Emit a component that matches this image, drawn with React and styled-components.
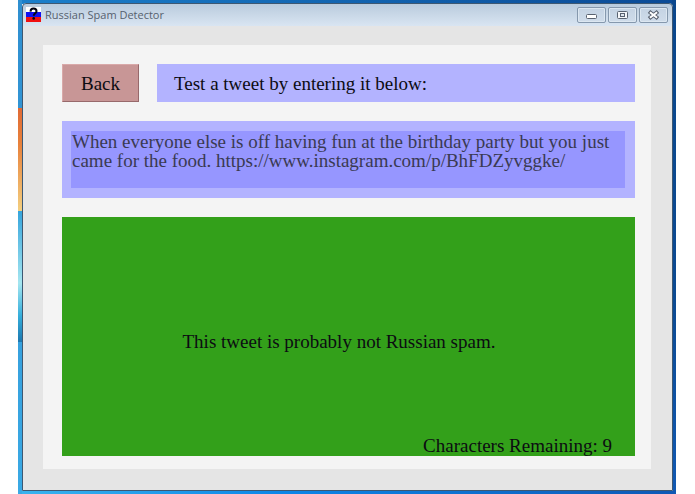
import { useState } from 'react';
import styled, { createGlobalStyle } from 'styled-components';

const serif = `Georgia, 'Liberation Serif', serif`;

const GlobalStyle = createGlobalStyle`
	* {
		box-sizing: border-box;
	}

	body {
		margin: 0;
		background: #fff;
	}
`;

// strip of wallpaper that shows around the window
const Desktop = styled.div`
	display: flex;
	min-height: 100vh;
	margin: 0 19px 0 18px;
	padding: 3px 3px 3px 4px;
	background:
		linear-gradient(#e06a35, #e8823c 35%, #f3cf80) 0 108px / 4px 103px no-repeat,
		linear-gradient(#36a5dc, #a5e6f0 55%, #35aedb 80%, #1c78b0) 0 211px / 4px 131px no-repeat,
		linear-gradient(#2f8fd0, #3aa9e4) 0 0 / 4px 100% no-repeat,
		linear-gradient(#0b478c, #0c4a92 60%, #1159b3) 100% 0 / 4px 100% no-repeat,
		linear-gradient(90deg, #1a7fcb, #0a4a96) 0 0 / 100% 4px no-repeat,
		linear-gradient(90deg, #3ab4ee, #0d86e8 40%, #0f58b5) 0 100% / 100% 4px no-repeat;
`;

const Window = styled.main`
	flex: 1;
	display: flex;
	flex-direction: column;
	overflow: hidden;
	border: 1px solid #e6edf5;
	outline: 1px solid #3d5872;
	outline-offset: -1px;
	border-radius: 4px 4px 0 0;
	background: #e5e5e5;
`;

const TitleBar = styled.header`
	display: flex;
	align-items: flex-start;
	height: 22px;
	padding: 3px 4px 0 3px;
	background: linear-gradient(#b9cbdd, #d9e5f2);
`;

const AppIcon = styled.svg`
	width: 15px;
	height: 15px;
	margin-right: 4px;
`;

const Title = styled.h1`
	flex: 1;
	margin: 0;
	color: #56616e;
	font: 11px/16px 'Segoe UI', 'Open Sans', sans-serif;
`;

const Controls = styled.div`
	display: flex;
	gap: 2px;
`;

const ControlButton = styled.button`
	display: grid;
	place-items: center;
	width: 29px;
	height: 16px;
	padding: 0;
	border: 1px solid #8598ad;
	border-radius: 2px;
	background: linear-gradient(#c4d3e3, #cfdcea);
	box-shadow: inset 0 0 0 1px #dce7f1;
`;

const Panel = styled.section`
	flex: 1;
	display: flex;
	flex-direction: column;
	gap: 19px;
	margin: 19px 21px 21px 20px;
	padding: 19px 16px 13px 19px;
	background: #f4f4f4;
	color: #0c0c12;
	font: 19px/19px ${serif};
`;

const TopRow = styled.div`
	display: flex;
	gap: 18px;
	height: 38px;
`;

const BackButton = styled.button`
	width: 77px;
	padding: 0;
	border: 1px solid;
	border-color: #d9a9a9 #97696b #97696b #d9a9a9;
	background: #c89696;
	color: inherit;
	font: inherit;
`;

const Prompt = styled.label`
	flex: 1;
	display: flex;
	align-items: center;
	padding: 0 17px;
	background: #b3b3ff;
`;

const TweetBox = styled.div`
	display: flex;
	padding: 10px 10px 10px 9px;
	background: #b3b3ff;
`;

const TweetInput = styled.textarea`
	flex: 1;
	height: 57px;
	padding: 1px;
	border: none;
	outline: none;
	resize: none;
	overflow: hidden;
	background: #9696ff;
	color: #3a3a52;
	font: inherit;
`;

const Result = styled.div`
	flex: 1;
	display: flex;
	flex-direction: column;
	padding: 11px 23px 1px 4px;
	background: #33a01a;
`;

const Verdict = styled.p`
	flex: 1;
	display: grid;
	place-items: center;
	margin: 0;
	padding-top: 19px;
`;

const Remaining = styled.p`
	margin: 0;
	text-align: right;
`;

const tweet =
	'When everyone else is off having fun at the birthday party but you just came for the food. https://www.instagram.com/p/BhFDZyvggke/';
const limit = 140;

export default function App() {
	const [text, setText] = useState(tweet);

	return (
		<>
			<GlobalStyle />
			<Desktop>
				<Window>
					<TitleBar>
						<AppIcon viewBox='0 0 15 15' aria-hidden='true'>
							<path fill='#fff' d='M0 0h15v5H0z' />
							<path fill='#1010f0' d='M0 5h15v5H0z' />
							<path fill='#f01010' d='M0 10h15v5H0z' />
							<path
								d='M4.5 4.6C4.6 2.3 6 1.6 7.5 1.6c1.8 0 3 1 3 2.6 0 2-2.7 2.2-2.7 4.6'
								fill='none'
								stroke='#050510'
								strokeWidth='2'
							/>
							<circle cx='7.7' cy='11.4' r='1.3' fill='#050510' />
						</AppIcon>
						<Title>Russian Spam Detector</Title>
						<Controls>
							<ControlButton aria-label='Minimize'>
								<svg width='13' height='12' viewBox='0 0 13 12'>
									<rect x='1.5' y='5.5' width='10' height='4' rx='1' fill='#fff' stroke='#596270' />
								</svg>
							</ControlButton>
							<ControlButton aria-label='Maximize'>
								<svg width='13' height='12' viewBox='0 0 13 12'>
									<rect x='1.5' y='2.5' width='10' height='7' rx='1' fill='#f4f6f9' stroke='#596270' />
									<rect x='4.5' y='4.5' width='4' height='3' fill='#dfe6ee' stroke='#596270' />
								</svg>
							</ControlButton>
							<ControlButton aria-label='Close'>
								<svg width='13' height='12' viewBox='0 0 13 12' fill='none'>
									<path d='M2 2.5l9 7M11 2.5l-9 7' stroke='#596270' strokeWidth='4' />
									<path d='M2.9 3.2l7.2 5.6M10.1 3.2L2.9 8.8' stroke='#fff' strokeWidth='2' />
								</svg>
							</ControlButton>
						</Controls>
					</TitleBar>
					<Panel>
						<TopRow>
							<BackButton>Back</BackButton>
							<Prompt htmlFor='tweet'>Test a tweet by entering it below:</Prompt>
						</TopRow>
						<TweetBox>
							<TweetInput
								id='tweet'
								spellCheck={false}
								maxLength={limit}
								value={text}
								onChange={(e) => setText(e.target.value)}
							/>
						</TweetBox>
						<Result>
							<Verdict>This tweet is probably not Russian spam.</Verdict>
							<Remaining>Characters Remaining: {limit - text.length}</Remaining>
						</Result>
					</Panel>
				</Window>
			</Desktop>
		</>
	);
}
